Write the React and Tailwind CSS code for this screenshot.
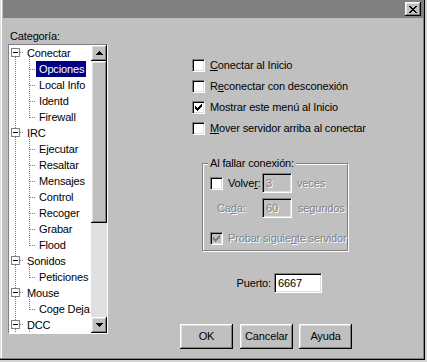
const sunken =
  'border border-t-[#808080] border-l-[#808080] border-b-white border-r-white shadow-[inset_1px_1px_0_#000,inset_-1px_-1px_0_#dfdfdf]'
const raised =
  'bg-[#c0c0c0] shadow-[inset_-1px_-1px_0_#000,inset_1px_1px_0_#fff,inset_-2px_-2px_0_#808080,inset_2px_2px_0_#dfdfdf]'
const dim = 'text-[#808080] [text-shadow:1px_1px_0_#fff]'

const CHECK = [
  [6, 0, 1], [5, 1, 2], [0, 2, 1], [4, 2, 3], [0, 3, 2], [3, 3, 3], [0, 4, 5], [1, 5, 3], [2, 6, 1],
]

function Tick({ color = '#000' }) {
  return (
    <svg width="7" height="7" viewBox="0 0 7 7" shapeRendering="crispEdges">
      {CHECK.map(([x, y, w], i) => <rect key={i} x={x} y={y} width={w} height="1" fill={color} />)}
    </svg>
  )
}

function Checkbox({ checked, disabled }) {
  return (
    <span className={`w-[13px] h-[13px] shrink-0 flex items-center justify-center ${sunken} ${disabled ? 'bg-[#c0c0c0]' : 'bg-white'}`}>
      {checked && <Tick color={disabled ? '#808080' : '#000'} />}
    </span>
  )
}

function Arrow({ down }) {
  return (
    <svg width="7" height="4" viewBox="0 0 7 4" shapeRendering="crispEdges">
      {down
        ? <path d="M0 0h7v1H0zM1 1h5v1H1zM2 2h3v1H2zM3 3h1v1H3z" fill="#000" />
        : <path d="M3 0h1v1H3zM2 1h3v1H2zM1 2h5v1H1zM0 3h7v1H0z" fill="#000" />}
    </svg>
  )
}

// dotted tree connectors
function Lines({ root, first, last }) {
  const dot = { stroke: '#808080', strokeDasharray: '1 1', shapeRendering: 'crispEdges' }
  if (root) {
    return (
      <svg width="15" height="16" className="shrink-0 overflow-visible">
        {!first && <line x1="6.5" y1="0" x2="6.5" y2="3" {...dot} />}
        <line x1="6.5" y1="12" x2="6.5" y2="16" {...dot} />
        <line x1="20.5" y1="12" x2="20.5" y2="16" {...dot} />
        <line x1="11" y1="7.5" x2="15" y2="7.5" {...dot} />
        <rect x="2.5" y="3.5" width="8" height="8" fill="#fff" stroke="#808080" shapeRendering="crispEdges" />
        <line x1="4" y1="7.5" x2="9" y2="7.5" stroke="#000" shapeRendering="crispEdges" />
      </svg>
    )
  }
  return (
    <svg width="27" height="16" className="shrink-0">
      <line x1="6.5" y1="0" x2="6.5" y2="16" {...dot} />
      <line x1="20.5" y1="0" x2="20.5" y2={last ? 9 : 16} {...dot} />
      <line x1="21" y1="8.5" x2="27" y2="8.5" {...dot} />
    </svg>
  )
}

const tree = [
  ['Conectar', ['Opciones', 'Local Info', 'Identd', 'Firewall']],
  ['IRC', ['Ejecutar', 'Resaltar', 'Mensajes', 'Control', 'Recoger', 'Grabar', 'Flood']],
  ['Sonidos', ['Peticiones']],
  ['Mouse', ['Coge Deja']],
  ['DCC', []],
]

function TreeRow({ label, root, first, last, selected }) {
  return (
    <div className="flex items-center h-[16px] whitespace-nowrap">
      <Lines root={root} first={first} last={last} />
      <span className={`pl-[3px] pr-[2px] leading-[16px] ${selected ? 'bg-[#000080] text-white' : ''}`}>{label}</span>
    </div>
  )
}

export default function App() {
  return (
    <div className="w-[427px] h-[362px] bg-[#d4d4d4] text-[11px] leading-[13px] tracking-[-0.15px] text-black whitespace-nowrap" style={{ fontFamily: '"Liberation Sans", Arial, sans-serif' }}>
      <div className="w-[425px] h-[360px] bg-[#c0c0c0] border-r border-b border-black shadow-[inset_-1px_-1px_0_#808080,inset_1px_0_0_#dfdfdf,inset_2px_0_0_#fff] flex flex-col">

        {/* Title bar (inactive) */}
        <div className="ml-[3px] mr-[1px] h-[18px] bg-[#808080] flex justify-end items-start pt-[2px] pr-[2px] shrink-0">
          <div className={`w-[16px] h-[14px] flex items-center justify-center ${raised}`}>
            <svg width="8" height="7" viewBox="0 0 8 7" shapeRendering="crispEdges">
              <path d="M0 0h2v1H0zM6 0h2v1H6zM1 1h2v1H1zM5 1h2v1H5zM2 2h4v1H2zM3 3h2v1H3zM2 4h4v1H2zM1 5h2v1H1zM5 5h2v1H5zM0 6h2v1H0zM6 6h2v1H6z" fill="#000" />
            </svg>
          </div>
        </div>

        <div className="flex flex-1">
          {/* Category tree */}
          <div className="pl-[8px] pt-[12px]">
            <div className="pl-[2px]">Categoría:</div>
            <div className={`mt-[1px] w-[100px] h-[290px] flex ${sunken}`}>
              <div className="flex-1 bg-white overflow-hidden">
                {tree.map(([root, kids], i) => (
                  <div key={root}>
                    <TreeRow label={root} root first={i === 0} />
                    {kids.map((k, j) => (
                      <TreeRow key={k} label={k} last={j === kids.length - 1} selected={k === 'Opciones'} />
                    ))}
                  </div>
                ))}
              </div>
              <div className="w-[16px] flex flex-col">
                <div className={`h-[16px] flex items-center justify-center ${raised}`}><Arrow /></div>
                <div className={`h-[162px] ${raised}`} />
                <div className="flex-1 bg-[#e0e0e0]" />
                <div className={`h-[16px] flex items-center justify-center ${raised}`}><Arrow down /></div>
              </div>
            </div>
          </div>

          {/* Options */}
          <div className="ml-[72px] pt-[37px] flex flex-col">
            <div className="pl-[12px]">
              <label className="flex items-center gap-[5px] h-[21px]"><Checkbox /><span><u>C</u>onectar al Inicio</span></label>
              <label className="flex items-center gap-[5px] h-[21px]"><Checkbox /><span>R<u>e</u>conectar con desconexión</span></label>
              <label className="flex items-center gap-[5px] h-[21px]"><Checkbox checked /><span>Mostrar este menú al Inicio</span></label>
              <label className="flex items-center gap-[5px] h-[21px]"><Checkbox /><span><u>M</u>over servidor arriba al conectar</span></label>
            </div>

            <div className="relative mt-[24px] ml-[22px] w-[146px] h-[88px] border border-[#808080] shadow-[1px_1px_0_#fff,inset_1px_1px_0_#fff] pt-[9px] pl-[7px]">
              <span className="absolute -top-[7px] left-[5px] px-[2px] bg-[#c0c0c0]">Al fallar conexión:</span>
              <div className="flex items-center h-[20px]">
                <div className="w-[52px] flex items-center gap-[5px]"><Checkbox /><span>Volve<u>r</u>:</span></div>
                <div className={`w-[30px] h-[20px] bg-[#c0c0c0] pl-[3px] flex items-center ${sunken} ${dim}`}>3</div>
                <span className={`ml-[5px] ${dim}`}>veces</span>
              </div>
              <div className="flex items-center h-[20px] mt-[5px]">
                <div className={`w-[52px] pl-[7px] ${dim}`}>Ca<u>d</u>a:</div>
                <div className={`w-[30px] h-[20px] bg-[#c0c0c0] pl-[3px] flex items-center ${sunken} ${dim}`}>60</div>
                <span className={`ml-[6px] ${dim}`}>segundos</span>
              </div>
              <div className="flex items-center gap-[5px] h-[14px] mt-[13px]">
                <Checkbox checked disabled />
                <span className={dim}>Probar siguie<u>n</u>te servidor</span>
              </div>
            </div>

            <div className="mt-[22px] w-[142px] flex justify-end items-center gap-[3px]">
              <span>Puerto:</span>
              <div className={`w-[48px] h-[20px] bg-white pl-[3px] flex items-center ${sunken}`}>6667</div>
            </div>

            <div className="mt-[31px] flex">
              <button className={`w-[53px] h-[25px] mr-[7px] ${raised}`}>OK</button>
              <button className={`w-[53px] h-[25px] mr-[6px] ${raised}`}>Cancelar</button>
              <button className={`w-[53px] h-[25px] ${raised}`}>Ayuda</button>
            </div>
          </div>
        </div>
      </div>
    </div>
  )
}
